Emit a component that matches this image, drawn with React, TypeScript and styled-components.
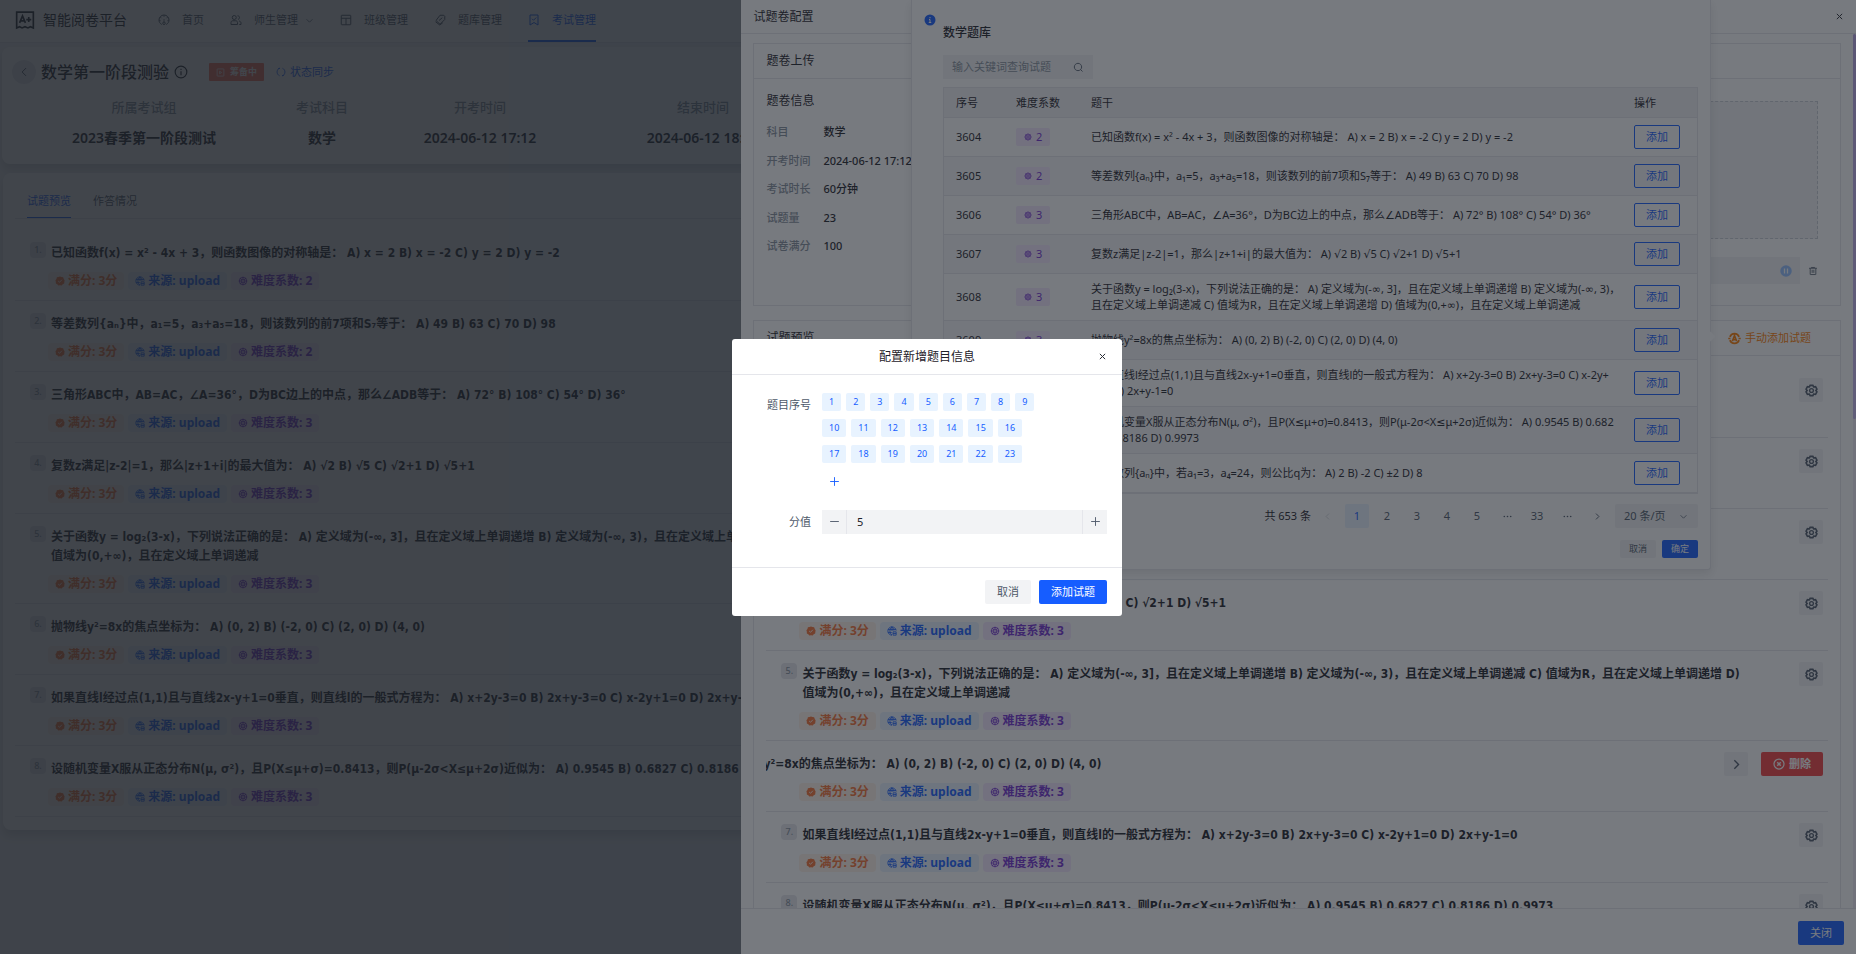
import React from "react";
import styled, { createGlobalStyle, css } from "styled-components";

const color = {
  text: "#1d2129",
  text2: "#4e5969",
  text3: "#86909c",
  text4: "#c9cdd4",
  border: "#e5e6eb",
  fill: "#f2f3f5",
  fillLight: "#f7f8fa",
  primary: "#165dff",
  primaryLight: "#e8f3ff",
  orange: "#f77234",
  orangeLight: "#fff3e8",
  purple: "#722ed1",
  purpleLight: "#f5e8ff",
  red: "#f53f3f",
};

const GlobalStyle = createGlobalStyle`
  *, *::before, *::after { box-sizing: border-box; }
  body {
    margin: 0;
    overflow: hidden;
    background: ${color.fill};
    color: ${color.text};
    font-family: "Noto Sans", "DejaVu Sans", "Noto Sans CJK SC", sans-serif;
    font-size: 11px;
    line-height: 16px;
  }
  button, input, select { font: inherit; color: inherit; margin: 0; }
  h1, h2, h3, p, ol, dl, dd { margin: 0; padding: 0; font-weight: 500; }
  ol { list-style: none; }
`;

/* ---------- icons ---------- */

const Svg = styled.svg<{ $size: number }>`
  display: block;
  flex: none;
  width: ${(p) => p.$size}px;
  height: ${(p) => p.$size}px;
  fill: none;
  stroke: currentColor;
  stroke-width: 4;
`;

const paths: Record<string, React.ReactNode> = {
  close: <path d="M9.857 9.858 24 24m0 0 14.142 14.142M24 24 38.142 9.858M24 24 9.857 38.142" strokeWidth="5" />,
  left: <path d="M32 8.4 16.444 23.956 32 39.513" />,
  right: <path d="m16 39.513 15.556-15.557L16 8.4" strokeWidth="5" />,
  down: <path d="M39.6 17.443 24.043 33 8.487 17.443" />,
  plus: <path d="M5 24h38M24 5v38" />,
  minus: <path d="M5 24h38" />,
  search: (
    <path d="M33.072 33.071c6.248-6.248 6.248-16.379 0-22.627-6.249-6.249-16.38-6.249-22.628 0-6.248 6.248-6.248 16.379 0 22.627 6.248 6.248 16.38 6.248 22.628 0Zm0 0 8.485 8.485" />
  ),
  trash: (
    <path d="M5 11h5.5m0 0v29a1 1 0 0 0 1 1h25a1 1 0 0 0 1-1V11m-27 0H16m21.5 0H43m-5.5 0H32m-16 0V7h16v4m-16 0h16M20 18v15M28 18v15" />
  ),
  more: (
    <g fill="currentColor" stroke="none">
      <circle cx="10" cy="24" r="3.5" />
      <circle cx="24" cy="24" r="3.5" />
      <circle cx="38" cy="24" r="3.5" />
    </g>
  ),
  info: (
    <>
      <circle cx="24" cy="24" r="20" />
      <path d="M24 13v4M24 21v14" />
    </>
  ),
  infoFill: (
    <>
      <circle cx="24" cy="24" r="22" fill="currentColor" stroke="none" />
      <path d="M24 12v5M20 22h4v11M19 34h10" stroke="#fff" />
    </>
  ),
  pause: (
    <>
      <circle cx="24" cy="24" r="23" fill="currentColor" stroke="none" />
      <path d="M18 14v20M30 14v20" stroke="#fff" strokeWidth="5" />
    </>
  ),
  dashboard: (
    <>
      <path d="M15 42C8 38 4 32 4 24 4 13 13 4 24 4s20 9 20 20c0 8-4 14-11 18" />
      <path d="M24 5v7M9 12l5 5M39 12l-5 5M4 27h7M44 27h-7M24 20v12" strokeWidth="3" />
      <circle cx="24" cy="37" r="5" />
    </>
  ),
  users: (
    <>
      <circle cx="17" cy="14" r="8" />
      <path d="M4 42v-8c0-4 3-7 7-7h12c4 0 7 3 7 7v8H4ZM30 7c5 0 8 3 8 7s-3 7-6 8M36 28c5 1 8 4 8 8v6h-7" />
    </>
  ),
  layout: (
    <>
      <rect x="5" y="5" width="38" height="38" rx="2" />
      <path d="M5 17h38M24 17v26" />
    </>
  ),
  tag: (
    <>
      <path d="M24 5h15l4 4v13L24 41 8 26 24 5Z" />
      <path d="m6 31 17 13 12-9M20 26l13-11" />
    </>
  ),
  bookmark: (
    <>
      <path d="M8 4h32v40L24 34 8 44V4Z" />
      <path d="m16 19 6 6 11-11" />
    </>
  ),
  sync: (
    <path d="M18 6C10 8 5 16 5 24s5 15 12 18M30 42c8-2 13-10 13-18S38 9 31 6M10 8l9-2M38 40l-9 2" />
  ),
  prepare: (
    <>
      <rect x="6" y="5" width="36" height="38" rx="2" />
      <path d="m19 17 11 7-11 7V17Z" />
    </>
  ),
  check: (
    <>
      <path
        d="m24 2 7 3 8 1 3 8 4 6-1 8-1 8-7 4-5 5-8-1-8 1-5-5-7-4V28l-2-8 5-6 2-8 8-1 7-3Z"
        fill="currentColor"
        stroke="none"
      />
      <path d="m15 24 7 6 11-12" stroke="#fff" />
    </>
  ),
  globe: (
    <>
      <path d="M44 22C43 12 34 4 24 4 13 4 4 13 4 24s9 20 20 20M5 17h38M5 31h18M24 4c-8 6-10 14-10 20s3 15 10 20M24 4c6 5 9 11 9 18M24 4v20" />
      <path d="M29 28h15v16H29zM29 36h15" />
    </>
  ),
  atom: (
    <>
      <circle cx="24" cy="24" r="18" />
      <circle cx="24" cy="24" r="7" />
      <path d="M24 4v13M24 31v13M4 24h13M31 24h13M10 10l9 9M29 29l9 9M38 10l-9 9M10 38l9-9" />
    </>
  ),
  gear: (
    <>
      <path d="M19 5h10l3 6 7-1 5 9-4 5 4 5-5 9-7-1-3 6H19l-3-6-7 1-5-9 4-5-4-5 5-9 7 1 3-6Z" strokeWidth="6" />
      <circle cx="24" cy="24" r="7" strokeWidth="5" />
    </>
  ),
  circleX: (
    <>
      <circle cx="24" cy="24" r="20" strokeWidth="5" />
      <path d="m17 17 14 14M31 17 17 31" strokeWidth="6" />
    </>
  ),
  auto: (
    <>
      <path d="M41 18A18 18 0 0 0 7 18M7 30a18 18 0 0 0 34 0M1 24h8M39 24h8" strokeWidth="6" />
      <path d="m16 34 8-21 8 21M20 28h8" strokeWidth="6" />
    </>
  ),
  logo: (
    <>
      <path d="M4 43V5h40v38l-7-3-6 3-7-3-7 3-6-3-7 3Z" />
      <path d="m11 31 7-17 7 17M13 26h10M33 17v12M27 23h12" />
    </>
  ),
};

const Icon = ({ name, size = 12 }: { name: string; size?: number }) => (
  <Svg $size={size} viewBox="0 0 48 48" aria-hidden="true">
    {paths[name]}
  </Svg>
);

/* ---------- shared controls ---------- */

const Button = styled.button<{ $kind?: "primary" | "outline" | "danger"; $mini?: boolean }>`
  display: inline-flex;
  align-items: center;
  justify-content: center;
  gap: 4px;
  flex: none;
  height: 24px;
  padding: 0 11px;
  border: 1px solid transparent;
  border-radius: 2px;
  background: ${color.fill};
  color: ${color.text2};
  white-space: nowrap;
  cursor: pointer;
  ${(p) => p.$mini && css`height: 18px; padding: 0 8px; font-size: 9px;`}
  ${(p) => p.$kind === "primary" && css`background: ${color.primary}; color: #fff;`}
  ${(p) => p.$kind === "danger" && css`background: ${color.red}; color: #fff; font-weight: 600;`}
  ${(p) => p.$kind === "outline" && css`background: transparent; border-color: ${color.primary}; color: ${color.primary};`}
`;

const IconButton = styled.button<{ $filled?: boolean; $round?: boolean }>`
  display: flex;
  align-items: center;
  justify-content: center;
  flex: none;
  width: 24px;
  height: 24px;
  padding: 0;
  border: 0;
  border-radius: ${(p) => (p.$round ? "50%" : "2px")};
  background: ${(p) => (p.$round ? color.border : p.$filled ? color.fill : "transparent")};
  color: ${color.text2};
  cursor: pointer;
`;

const CloseButton = styled(IconButton)`
  width: 16px;
  height: 16px;
  color: ${color.text};
`;

const toneStyles = {
  orange: css`background: ${color.orangeLight}; color: ${color.orange};`,
  blue: css`background: ${color.primaryLight}; color: ${color.primary};`,
  purple: css`background: ${color.purpleLight}; color: ${color.purple};`,
};

const Tag = styled.span<{ $tone: keyof typeof toneStyles; $strong?: boolean }>`
  display: inline-flex;
  align-items: center;
  gap: 4px;
  height: 18px;
  padding: 0 8px;
  border-radius: 2px;
  white-space: nowrap;
  ${(p) => toneStyles[p.$tone]}
  ${(p) => p.$strong && css`gap: 3px; border-radius: 4px; padding: 0 7px; font-size: 12px; font-weight: 700;`}
`;

const Mask = styled.div`
  position: fixed;
  inset: 0;
  background: rgba(29, 33, 41, 0.6);
`;

/* ---------- page ---------- */

const Page = styled.div`
  min-height: 100vh;
`;

const TopBar = styled.header`
  display: flex;
  height: 43px;
  padding-left: 15px;
  background: #fff;
  border-bottom: 1px solid ${color.border};
`;

const Brand = styled.div`
  display: flex;
  align-items: center;
  gap: 8px;
  width: 143px;
  padding-bottom: 2px;
  font-size: 14px;
`;

const Nav = styled.nav`
  display: flex;
  gap: 26px;
`;

const NavLink = styled.a<{ $active?: boolean }>`
  display: flex;
  align-items: center;
  gap: 12px;
  color: ${(p) => (p.$active ? color.primary : color.text2)};
  border-bottom: 2px solid ${(p) => (p.$active ? color.primary : "transparent")};
  text-decoration: none;
  white-space: nowrap;

  svg:last-child:not(:first-child) {
    margin-left: -5px;
  }
`;

const Panel = styled.section`
  background: #fff;
  border-radius: 8px;
  box-shadow: 0 6px 10px rgba(29, 33, 41, 0.16);
`;

const ExamPanel = styled(Panel)`
  margin: 4px 2px 0;
  height: 117px;
  padding-top: 13px;
`;

const ExamTitleRow = styled.div`
  display: flex;
  align-items: center;
  padding-left: 10px;
`;

const ExamTitle = styled.h1`
  margin: 0 5px;
  font-size: 16px;
  line-height: 24px;
`;

const StatusTag = styled.span`
  display: inline-flex;
  align-items: center;
  gap: 5px;
  height: 18px;
  margin: 0 10px 0 21px;
  padding: 0 7px;
  border-radius: 1px;
  background: #fc6f5a;
  color: #fff;
  font-size: 9px;
  font-weight: 700;
`;

const TextButton = styled.button<{ $tone?: string }>`
  display: inline-flex;
  align-items: center;
  gap: 4px;
  padding: 0 2px;
  border: 0;
  background: none;
  color: ${(p) => p.$tone ?? color.primary};
  cursor: pointer;
`;

const ExamFacts = styled.dl`
  display: grid;
  grid-template-columns: 284px 72px 244px 202px 1fr;
  margin-top: 13px;
  text-align: center;
  white-space: nowrap;

  dt {
    color: ${color.text3};
    font-size: 13px;
    line-height: 20px;
  }
  dd {
    margin-top: 11px;
    font-size: 14px;
    font-weight: 600;
    line-height: 20px;
  }
`;

const PreviewPanel = styled(Panel)`
  margin: 9px 3px 0;
  padding: 12px 12px 13px;
`;

const Tabs = styled.div`
  display: flex;
  gap: 22px;
  height: 34px;
  padding-left: 12px;
  border-bottom: 1px solid ${color.border};
`;

const Tab = styled.button<{ $active?: boolean }>`
  height: 33px;
  padding: 0;
  border: 0;
  border-bottom: 1px solid ${(p) => (p.$active ? color.primary : "transparent")};
  background: none;
  color: ${(p) => (p.$active ? color.primary : color.text2)};
  cursor: pointer;
`;

/* ---------- question list ---------- */

const QuestionList = styled.ol`
  padding-top: 11px;
`;

const QuestionRow = styled.li`
  overflow: hidden;
  padding: 11px 0 10px;
  border-bottom: 1px solid ${color.border};
`;

const QuestionHead = styled.div`
  display: flex;
  justify-content: flex-end;
  padding-right: 5px;
`;

const QuestionMain = styled.div`
  display: flex;
  align-items: flex-start;
  flex: 0 0 calc(100% - 24px);
  gap: 5px;
  padding: 1px 12px 0 15px;
`;

const QuestionNo = styled.span`
  flex: none;
  width: 16px;
  height: 16px;
  border-radius: 4px;
  background: ${color.border};
  color: ${color.text3};
  font-size: 9px;
  line-height: 16px;
  text-align: center;
`;

const QuestionText = styled.p`
  flex: 1;
  max-width: 950px;
  padding-top: 2px;
  font-family: "DejaVu Sans Condensed", "Noto Sans", "Noto Sans CJK SC", sans-serif;
  font-size: 12px;
  font-weight: 600;
  line-height: 19px;
`;

const QuestionActions = styled.div`
  display: flex;
  flex: none;
  gap: 13px;
  height: 20px;
`;

const QuestionTags = styled.div`
  display: flex;
  gap: 4px;
  margin-top: 9px;
  padding-left: 33px;
`;

type Question = { id: number; level: number; text: string; wrapAfter?: string };

const questions: Question[] = [
  { id: 3604, level: 2, text: "已知函数f(x) = x² - 4x + 3，则函数图像的对称轴是： A) x = 2 B) x = -2 C) y = 2 D) y = -2" },
  { id: 3605, level: 2, text: "等差数列{aₙ}中，a₁=5，a₃+a₅=18，则该数列的前7项和S₇等于： A) 49 B) 63 C) 70 D) 98" },
  { id: 3606, level: 3, text: "三角形ABC中，AB=AC，∠A=36°，D为BC边上的中点，那么∠ADB等于： A) 72° B) 108° C) 54° D) 36°" },
  { id: 3607, level: 3, text: "复数z满足|z-2|=1，那么|z+1+i|的最大值为： A) √2 B) √5 C) √2+1 D) √5+1" },
  { id: 3608, level: 3, text: "关于函数y = log₂(3-x)，下列说法正确的是： A) 定义域为(-∞, 3]，且在定义域上单调递增 B) 定义域为(-∞, 3)，且在定义域上单调递减 C) 值域为R，且在定义域上单调递增 D) 值域为(0,+∞)，且在定义域上单调递减" },
  { id: 3609, level: 3, text: "抛物线y²=8x的焦点坐标为： A) (0, 2) B) (-2, 0) C) (2, 0) D) (4, 0)" },
  { id: 3610, level: 3, wrapAfter: "C) x-2y+", text: "如果直线l经过点(1,1)且与直线2x-y+1=0垂直，则直线l的一般式方程为： A) x+2y-3=0 B) 2x+y-3=0 C) x-2y+1=0 D) 2x+y-1=0" },
  { id: 3611, level: 3, wrapAfter: "B) 0.682", text: "设随机变量X服从正态分布N(μ, σ²)，且P(X≤μ+σ)=0.8413，则P(μ-2σ<X≤μ+2σ)近似为： A) 0.9545 B) 0.6827 C) 0.8186 D) 0.9973" },
];

const bankQuestions: Question[] = [
  ...questions,
  { id: 3612, level: 3, text: "等比数列{aₙ}中，若a₁=3，a₄=24，则公比q为： A) 2 B) -2 C) ±2 D) 8" },
];

/* Stem in the narrow table column, with an optional fixed break inside a formula. */
const Stem = ({ text, wrapAfter }: Question) => {
  if (!wrapAfter) return <>{text}</>;
  const end = text.indexOf(wrapAfter) + wrapAfter.length;
  return <>{text.slice(0, end)}<br />{text.slice(end)}</>;
};

const Questions = ({ editable, openIndex }: { editable?: boolean; openIndex?: number }) => (
  <QuestionList>
    {questions.map((q, i) => (
      <QuestionRow key={q.id}>
        <QuestionHead>
          <QuestionMain>
            <QuestionNo>{i + 1}.</QuestionNo>
            <QuestionText>{q.text}</QuestionText>
          </QuestionMain>
          <QuestionActions>
            {!editable ? (
              <IconPlaceholder />
            ) : openIndex === i ? (
              <>
                <IconButton $filled aria-label="收起"><Icon name="right" size={13} /></IconButton>
                <Button $kind="danger"><Icon name="circleX" size={12} />删除</Button>
              </>
            ) : (
              <IconButton $filled aria-label="设置"><Icon name="gear" size={13} /></IconButton>
            )}
          </QuestionActions>
        </QuestionHead>
        <QuestionTags>
          <Tag $tone="orange" $strong><Icon name="check" size={10} />满分: 3分</Tag>
          <Tag $tone="blue" $strong><Icon name="globe" size={10} />来源: upload</Tag>
          <Tag $tone="purple" $strong><Icon name="atom" size={10} />难度系数: {q.level}</Tag>
        </QuestionTags>
      </QuestionRow>
    ))}
  </QuestionList>
);

const IconPlaceholder = styled.span`
  width: 24px;
`;

/* ---------- drawer ---------- */

const Drawer = styled.aside`
  position: fixed;
  top: 0;
  right: 0;
  bottom: 0;
  display: flex;
  flex-direction: column;
  width: calc(60% + 1px);
  background: #fff;
`;

const DrawerHeader = styled.header`
  display: flex;
  align-items: center;
  justify-content: space-between;
  flex: none;
  height: 34px;
  padding: 0 9px 0 12px;
  border-bottom: 1px solid ${color.border};
  font-size: 12px;
`;

const DrawerBody = styled.div`
  display: flex;
  flex: 1;
  min-height: 0;
`;

const DrawerContent = styled.div`
  flex: 1;
  min-width: 0;
  overflow: hidden;
  padding: 9px 12px 0;
`;

const ScrollTrack = styled.div`
  width: 3px;
  background: #efeaf6;
`;

const ScrollThumb = styled.div`
  height: 44%;
  border-radius: 2px;
  background: linear-gradient(#b9a6e6, #c9b8f0);
`;

const DrawerFooter = styled.footer`
  display: flex;
  justify-content: flex-end;
  flex: none;
  height: 46px;
  padding: 12px 12px 0;
  border-top: 1px solid ${color.border};
`;

const Card = styled.section`
  margin-bottom: 14px;
  border: 1px solid ${color.border};
`;

const CardHeader = styled.header`
  display: flex;
  align-items: center;
  justify-content: space-between;
  height: 35px;
  padding: 0 27px 0 12px;
  border-bottom: 1px solid ${color.border};

  h2 {
    font-size: 12px;
    font-weight: 400;
  }
`;

const UploadBody = styled.div`
  display: flex;
  height: 226px;
  padding: 12px 22px 0 12px;
`;

const PaperInfo = styled.div`
  width: 300px;

  h3 {
    font-size: 12px;
    font-weight: 400;
    line-height: 20px;
  }
`;

const InfoGrid = styled.dl`
  display: grid;
  grid-template-columns: 57px 1fr;
  align-content: space-between;
  height: 130px;
  margin-top: 13px;

  dt {
    color: ${color.text3};
  }
`;

const UploadColumn = styled.div`
  flex: 1;
  padding-top: 10px;
`;

const DropArea = styled.div`
  height: 138px;
  border: 1px dashed ${color.text4};
  background: ${color.fill};
`;

const FileLine = styled.div`
  display: flex;
  align-items: center;
  gap: 8px;
  margin-top: 18px;
  color: ${color.text2};
`;

const FileBar = styled.div`
  display: flex;
  align-items: center;
  justify-content: flex-end;
  flex: 1;
  height: 27px;
  padding-right: 8px;
  background: ${color.fill};
  color: #94bfff;
`;

const PreviewBody = styled.div`
  padding: 0 12px;
`;

/* ---------- question bank popover ---------- */

const Popover = styled.div`
  position: fixed;
  top: 0;
  right: 145px;
  width: 800px;
  height: 570px;
  padding: 14px 12px 0 12px;
  border: 1px solid ${color.border};
  border-top: 0;
  border-radius: 0 0 3px 3px;
  background: #fff;
  box-shadow: 0 4px 10px rgba(0, 0, 0, 0.1);
  display: flex;
  gap: 7px;

  &::after {
    content: "";
    position: absolute;
    top: 333px;
    right: -4px;
    width: 7px;
    height: 7px;
    background: #fff;
    transform: rotate(45deg);
  }
`;

const PopoverIcon = styled.div`
  color: ${color.primary};
`;

const PopoverMain = styled.div`
  flex: 1;
  padding-top: 9px;
`;

const PopoverTitle = styled.h2`
  font-size: 12px;
  line-height: 20px;
`;

const SearchBox = styled.label`
  display: flex;
  align-items: center;
  width: 150px;
  height: 24px;
  margin: 12px 0 8px;
  padding: 0 9px;
  background: ${color.fill};
  color: ${color.text2};

  input {
    flex: 1;
    min-width: 0;
    padding: 0;
    border: 0;
    outline: 0;
    background: none;
  }
  input::placeholder {
    color: ${color.text3};
    opacity: 1;
  }
`;

const BankTable = styled.table`
  width: 100%;
  table-layout: fixed;
  border: 1px solid ${color.border};
  border-spacing: 0;

  th {
    height: 30px;
    padding: 0 12px;
    border-bottom: 1px solid ${color.border};
    background: ${color.fill};
    font-weight: 400;
    text-align: left;
    white-space: nowrap;
  }
  td {
    padding: 7px 12px;
    border-bottom: 1px solid ${color.border};
    vertical-align: middle;
    word-break: break-all;
  }
  td:nth-child(3) {
    padding-right: 0;
  }
  tbody tr:nth-child(even) td {
    background: ${color.fillLight};
  }
  ${Button}, ${Tag} {
    vertical-align: top;
  }
`;

const Pagination = styled.nav`
  display: flex;
  align-items: center;
  justify-content: flex-end;
  gap: 6px;
  margin-top: 10px;
  color: ${color.text2};
`;

const Total = styled.span`
  color: ${color.text};
  margin-right: -2px;
`;

const PageButton = styled(IconButton)<{ $current?: boolean; $disabled?: boolean }>`
  ${(p) => p.$current && css`background: ${color.primaryLight}; color: ${color.primary};`}
  ${(p) => p.$disabled && css`color: ${color.text4};`}
`;

const PageSize = styled.label`
  position: relative;
  display: flex;

  select {
    width: 83px;
    height: 24px;
    padding: 0 9px;
    border: 0;
    border-radius: 2px;
    appearance: none;
    background: ${color.fill};
  }
  svg {
    position: absolute;
    top: 8px;
    right: 10px;
  }
`;

const PopoverActions = styled.div`
  display: flex;
  justify-content: flex-end;
  gap: 6px;
  margin-top: 12px;
`;

/* ---------- modal ---------- */

const ModalLayer = styled.div`
  position: fixed;
  inset: 0;
  display: flex;
  align-items: center;
  justify-content: center;
  padding-right: 2px;
  background: rgba(29, 33, 41, 0.6);
`;

const Dialog = styled.div`
  width: 390px;
  border-radius: 3px;
  background: #fff;
`;

const DialogHeader = styled.header`
  display: grid;
  grid-template-columns: 16px 1fr 16px;
  align-items: center;
  height: 36px;
  padding: 1px 12px 0;
  border-bottom: 1px solid ${color.border};

  h2 {
    grid-column: 2;
    font-size: 12px;
    font-weight: 400;
    text-align: center;
  }
`;

const DialogBody = styled.form`
  display: grid;
  grid-template-columns: 64px 285px;
  column-gap: 11px;
  padding: 18px 15px 33px;
`;

const FieldLabel = styled.label`
  color: ${color.text2};
  line-height: 24px;
  text-align: right;
`;

const NumberTags = styled.div`
  display: flex;
  flex-wrap: wrap;
  gap: 8px 5px;
  max-width: 226px;
`;

const NumberTag = styled(Tag)`
  padding: 0 7px;
  font-size: 9px;
`;

const AddNumber = styled(IconButton)`
  height: 18px;
  margin-top: 10px;
  color: ${color.primary};
`;

const Stepper = styled.div`
  display: flex;
  height: 24px;
  margin-top: 19px;
  background: ${color.fill};

  input {
    flex: 1;
    min-width: 0;
    padding: 0 10px;
    border: 0;
    border-left: 1px solid ${color.border};
    border-right: 1px solid ${color.border};
    outline: 0;
    background: none;
  }
`;

const ScoreLabel = styled(FieldLabel)`
  margin-top: 19px;
`;

const DialogFooter = styled.footer`
  display: flex;
  justify-content: flex-end;
  gap: 8px;
  padding: 12px 15px;
  border-top: 1px solid ${color.border};
`;

const navItems = [
  { icon: "dashboard", label: "首页" },
  { icon: "users", label: "师生管理", menu: true },
  { icon: "layout", label: "班级管理" },
  { icon: "tag", label: "题库管理" },
  { icon: "bookmark", label: "考试管理", active: true },
];

const facts = [
  ["所属考试组", "2023春季第一阶段测试"],
  ["考试科目", "数学"],
  ["开考时间", "2024-06-12 17:12"],
  ["结束时间", "2024-06-12 18:12"],
];

const paperInfo = [
  ["科目", "数学"],
  ["开考时间", "2024-06-12 17:12"],
  ["考试时长", "60分钟"],
  ["试题量", "23"],
  ["试卷满分", "100"],
];

export default function App() {
  return (
    <>
      <GlobalStyle />
      <Page>
        <TopBar>
          <Brand><Icon name="logo" size={20} />智能阅卷平台</Brand>
          <Nav>
            {navItems.map((item) => (
              <NavLink key={item.label} href="#" $active={item.active}>
                <Icon name={item.icon} size={12} />
                {item.label}
                {item.menu && <Icon name="down" size={9} />}
              </NavLink>
            ))}
          </Nav>
        </TopBar>
        <ExamPanel>
          <ExamTitleRow>
            <IconButton $filled $round aria-label="返回"><Icon name="left" size={12} /></IconButton>
            <ExamTitle>数学第一阶段测验</ExamTitle>
            <Icon name="info" size={14} />
            <StatusTag><Icon name="prepare" size={9} />筹备中</StatusTag>
            <TextButton><Icon name="sync" size={10} />状态同步</TextButton>
          </ExamTitleRow>
          <ExamFacts>
            {facts.map(([k, v]) => (
              <div key={k}>
                <dt>{k}</dt>
                <dd>{v}</dd>
              </div>
            ))}
          </ExamFacts>
        </ExamPanel>
        <PreviewPanel>
          <Tabs>
            <Tab $active>试题预览</Tab>
            <Tab>作答情况</Tab>
          </Tabs>
          <Questions />
        </PreviewPanel>
      </Page>

      <Mask />
      <Drawer>
        <DrawerHeader>
          试题卷配置
          <CloseButton aria-label="关闭"><Icon name="close" size={9} /></CloseButton>
        </DrawerHeader>
        <DrawerBody>
          <DrawerContent>
            <Card>
              <CardHeader><h2>题卷上传</h2></CardHeader>
              <UploadBody>
                <PaperInfo>
                  <h3>题卷信息</h3>
                  <InfoGrid>
                    {paperInfo.map(([k, v]) => (
                      <React.Fragment key={k}>
                        <dt>{k}</dt>
                        <dd>{v}</dd>
                      </React.Fragment>
                    ))}
                  </InfoGrid>
                </PaperInfo>
                <UploadColumn>
                  <DropArea />
                  <FileLine>
                    <FileBar><Icon name="pause" size={12} /></FileBar>
                    <Icon name="trash" size={10} />
                  </FileLine>
                </UploadColumn>
              </UploadBody>
            </Card>
            <Card>
              <CardHeader>
                <h2>试题预览</h2>
                <TextButton $tone="#ff7d00"><Icon name="auto" size={13} />手动添加试题</TextButton>
              </CardHeader>
              <PreviewBody><Questions editable openIndex={5} /></PreviewBody>
            </Card>
          </DrawerContent>
          <ScrollTrack><ScrollThumb /></ScrollTrack>
        </DrawerBody>
        <DrawerFooter><Button $kind="primary">关闭</Button></DrawerFooter>
      </Drawer>

      <Popover>
        <PopoverIcon><Icon name="infoFill" size={12} /></PopoverIcon>
        <PopoverMain>
          <PopoverTitle>数学题库</PopoverTitle>
          <SearchBox>
            <input type="text" placeholder="输入关键词查询试题" aria-label="查询试题" />
            <Icon name="search" size={11} />
          </SearchBox>
          <BankTable>
            <colgroup>
              <col width="60" />
              <col width="75" />
              <col />
              <col width="75" />
            </colgroup>
            <thead>
              <tr>
                <th>序号</th>
                <th>难度系数</th>
                <th>题干</th>
                <th>操作</th>
              </tr>
            </thead>
            <tbody>
              {bankQuestions.map((q) => (
                <tr key={q.id}>
                  <td>{q.id}</td>
                  <td><Tag $tone="purple"><Icon name="atom" size={8} />{q.level}</Tag></td>
                  <td><Stem {...q} /></td>
                  <td><Button $kind="outline">添加</Button></td>
                </tr>
              ))}
            </tbody>
          </BankTable>
          <Pagination aria-label="分页">
            <Total>共 653 条</Total>
            <PageButton $disabled aria-label="上一页"><Icon name="left" size={9} /></PageButton>
            <PageButton $current>1</PageButton>
            <PageButton>2</PageButton>
            <PageButton>3</PageButton>
            <PageButton>4</PageButton>
            <PageButton>5</PageButton>
            <PageButton aria-label="更多"><Icon name="more" size={11} /></PageButton>
            <PageButton>33</PageButton>
            <PageButton aria-label="更多"><Icon name="more" size={11} /></PageButton>
            <PageButton aria-label="下一页"><Icon name="right" size={9} /></PageButton>
            <PageSize>
              <select aria-label="每页条数"><option>20 条/页</option></select>
              <Icon name="down" size={9} />
            </PageSize>
          </Pagination>
          <PopoverActions>
            <Button $mini>取消</Button>
            <Button $mini $kind="primary">确定</Button>
          </PopoverActions>
        </PopoverMain>
      </Popover>

      <ModalLayer>
        <Dialog role="dialog" aria-labelledby="dialog-title">
          <DialogHeader>
            <h2 id="dialog-title">配置新增题目信息</h2>
            <CloseButton aria-label="关闭"><Icon name="close" size={9} /></CloseButton>
          </DialogHeader>
          <DialogBody>
            <FieldLabel as="span">题目序号</FieldLabel>
            <div>
              <NumberTags>
                {Array.from({ length: 23 }, (_, i) => (
                  <NumberTag key={i} $tone="blue">{i + 1}</NumberTag>
                ))}
              </NumberTags>
              <AddNumber type="button" aria-label="添加序号"><Icon name="plus" size={11} /></AddNumber>
            </div>
            <ScoreLabel htmlFor="score">分值</ScoreLabel>
            <Stepper>
              <IconButton type="button" aria-label="减少"><Icon name="minus" size={11} /></IconButton>
              <input id="score" type="text" defaultValue="5" />
              <IconButton type="button" aria-label="增加"><Icon name="plus" size={11} /></IconButton>
            </Stepper>
          </DialogBody>
          <DialogFooter>
            <Button>取消</Button>
            <Button $kind="primary">添加试题</Button>
          </DialogFooter>
        </Dialog>
      </ModalLayer>
    </>
  );
}
